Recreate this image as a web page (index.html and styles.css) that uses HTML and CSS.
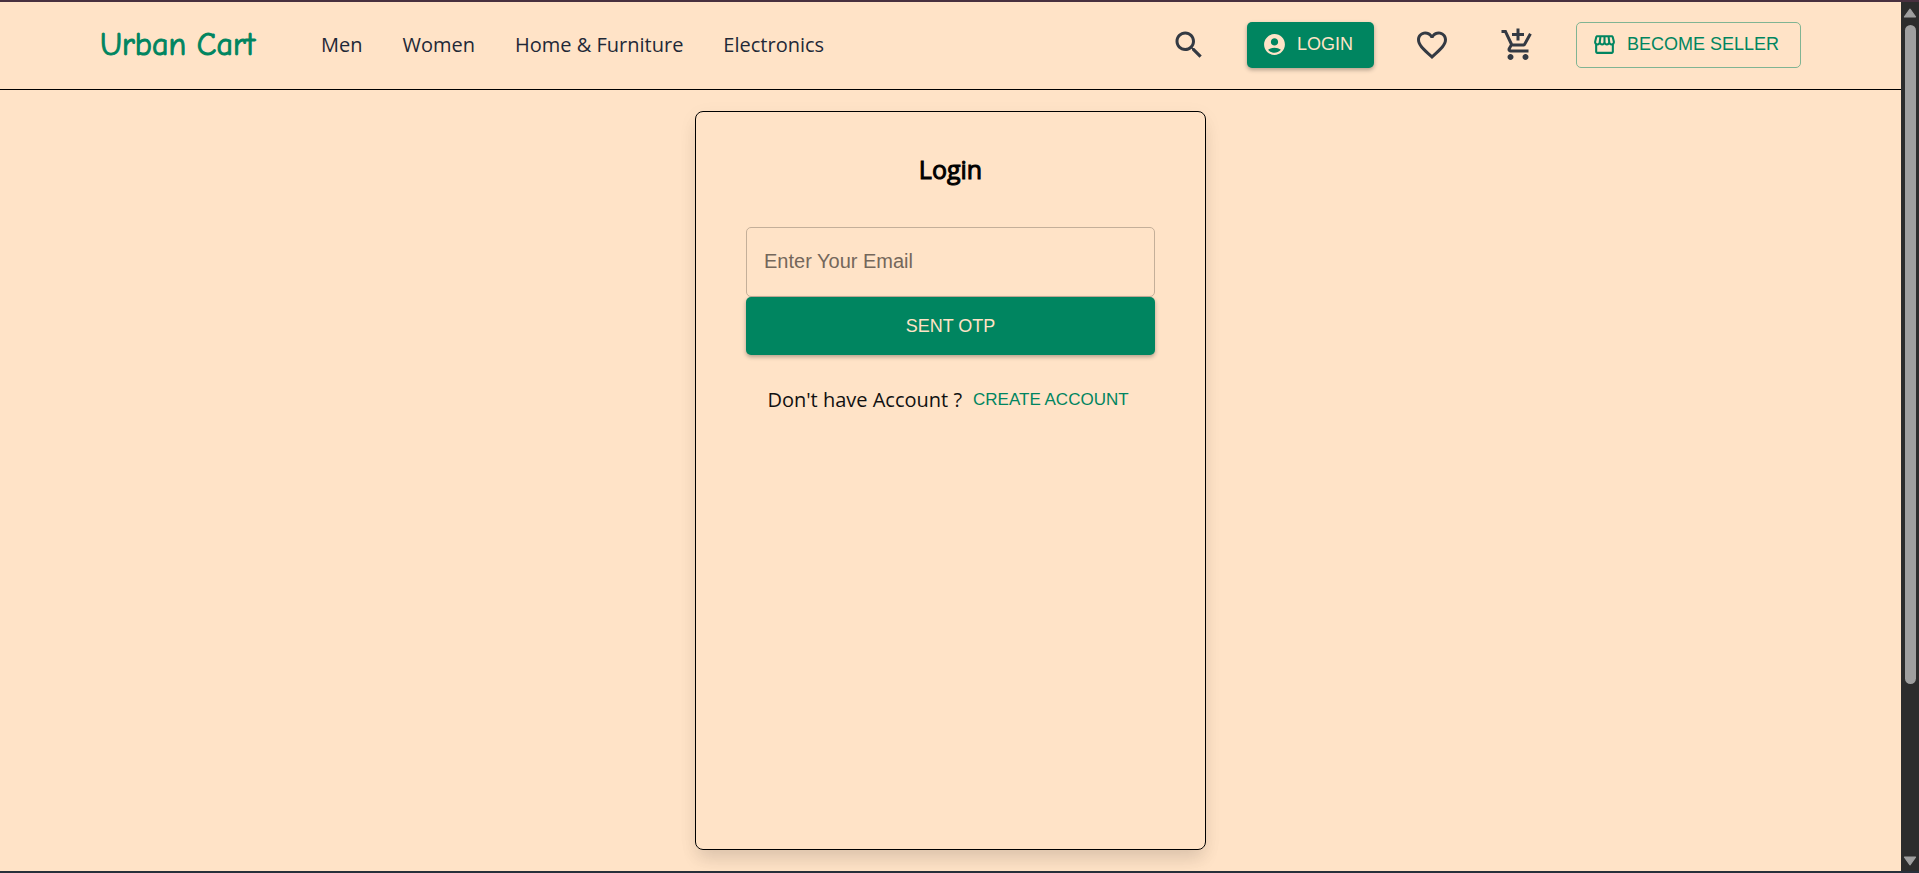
FILE: index.html
```html
<!DOCTYPE html>
<html lang="en">
<head>
<meta charset="utf-8">
<meta name="viewport" content="width=device-width, initial-scale=1">
<title>Urban Cart</title>
<link rel="stylesheet" href="styles.css">
</head>
<body>
<div class="window">
  <div class="view">
    <header class="topbar">
      <a class="logo" href="#">Urban Cart</a>
      <nav class="nav">
        <a href="#">Men</a>
        <a href="#">Women</a>
        <a href="#">Home &amp; Furniture</a>
        <a href="#">Electronics</a>
      </nav>
      <div class="actions">
        <button class="icon-button" type="button" aria-label="Search">
          <svg viewBox="0 0 24 24"><path d="M15.5 14h-.79l-.28-.27C15.41 12.59 16 11.11 16 9.5 16 5.91 13.09 3 9.5 3S3 5.91 3 9.5 5.91 16 9.5 16c1.61 0 3.09-.59 4.23-1.57l.27.28v.79l5 4.99L20.49 19l-4.99-5zm-6 0C7.01 14 5 11.99 5 9.5S7.01 5 9.5 5 14 7.01 14 9.5 11.99 14 9.5 14z"/></svg>
        </button>
        <button class="button button-solid" type="button">
          <svg viewBox="0 0 24 24"><path d="M12 2C6.48 2 2 6.48 2 12s4.48 10 10 10 10-4.48 10-10S17.52 2 12 2zm0 4c1.93 0 3.5 1.57 3.5 3.5S13.93 13 12 13s-3.5-1.57-3.5-3.5S10.07 6 12 6zm0 14c-2.03 0-4.43-.82-6.14-2.88C7.55 15.8 9.68 15 12 15s4.45.8 6.14 2.12C16.43 19.18 14.03 20 12 20z"/></svg>
          LOGIN
        </button>
        <button class="icon-button" type="button" aria-label="Wishlist">
          <svg viewBox="0 0 24 24"><path d="M16.5 3c-1.74 0-3.41.81-4.5 2.09C10.91 3.81 9.24 3 7.5 3 4.42 3 2 5.42 2 8.5c0 3.78 3.4 6.86 8.55 11.54L12 21.35l1.45-1.32C18.6 15.36 22 12.28 22 8.5 22 5.42 19.58 3 16.5 3zm-4.4 15.55l-.1.1-.1-.1C7.14 14.24 4 11.39 4 8.5 4 6.5 5.5 5 7.5 5c1.54 0 3.04.99 3.57 2.36h1.87C13.46 5.99 14.96 5 16.5 5c2 0 3.5 1.5 3.5 3.5 0 2.89-3.14 5.74-7.9 10.05z"/></svg>
        </button>
        <button class="icon-button" type="button" aria-label="Cart">
          <svg viewBox="0 0 24 24"><path d="M11 9h2V6h3V4h-3V1h-2v3H8v2h3v3zm-4 9c-1.1 0-1.99.9-1.99 2S5.9 22 7 22s2-.9 2-2-.9-2-2-2zm10 0c-1.1 0-1.99.9-1.99 2s.89 2 1.99 2 2-.9 2-2-.9-2-2-2zm-9.83-3.25l.03-.12.9-1.63h7.45c.75 0 1.41-.41 1.75-1.03l3.86-7.01L19.42 4h-.01l-1.1 2-2.76 5H8.53l-.13-.27L6.16 6l-.95-2-.94-2H1v2h2l3.6 7.59-1.35 2.45c-.16.28-.25.61-.25.96 0 1.1.9 2 2 2h12v-2H7.42c-.13 0-.25-.11-.25-.25z"/></svg>
        </button>
        <button class="button button-outline" type="button">
          <svg viewBox="0 0 24 24"><path d="M21.9 8.89l-1.05-4.37c-.22-.9-1-1.52-1.91-1.52H5.05c-.9 0-1.69.63-1.9 1.52L2.1 8.89c-.24 1.02-.02 2.06.62 2.88.08.11.19.19.28.29V19c0 1.1.9 2 2 2h14c1.1 0 2-.9 2-2v-6.94c.09-.09.2-.18.28-.28.64-.82.87-1.87.62-2.89zm-2.99-3.9l1.05 4.37c.1.42.01.84-.25 1.17-.14.18-.44.47-.94.47-.61 0-1.14-.49-1.21-1.14L16.98 5l1.93-.01zM13 5h1.96l.54 4.52c.05.39-.07.78-.33 1.07-.22.26-.54.41-.95.41-.67 0-1.22-.59-1.22-1.31V5zM8.49 9.52L9.04 5H11v4.69c0 .72-.55 1.31-1.29 1.31-.34 0-.65-.15-.89-.41-.25-.29-.37-.68-.33-1.07zm-4.45-.16L5.05 5h1.97l-.58 4.86c-.08.65-.6 1.14-1.21 1.14-.49 0-.8-.29-.93-.47-.27-.32-.36-.75-.26-1.17zM5 19v-6.03c.08.01.15.03.23.03.87 0 1.66-.36 2.24-.95.6.6 1.4.95 2.31.95.87 0 1.65-.36 2.23-.93.59.57 1.39.93 2.29.93.84 0 1.64-.35 2.24-.95.58.59 1.37.95 2.24.95.08 0 .15-.02.23-.03V19H5z"/></svg>
          BECOME SELLER
        </button>
      </div>
    </header>
    <main class="page">
      <form class="card">
        <h1>Login</h1>
        <input class="field" type="email" placeholder="Enter Your Email" aria-label="Enter Your Email">
        <button class="submit" type="button">SENT OTP</button>
        <p class="signup">Don't have Account ? <button class="text-button" type="button">CREATE ACCOUNT</button></p>
      </form>
    </main>
  </div>
  <div class="scrollbar" aria-hidden="true">
    <svg viewBox="0 0 12 9"><path d="M6 1 11 8H1z"/></svg>
    <div class="track"><div class="thumb"></div></div>
    <svg viewBox="0 0 12 9"><path d="M6 8 1 1h10z"/></svg>
  </div>
</div>
</body>
</html>
```
FILE: styles.css
```css
:root {
  --green: #008560;
  --cream: #ffe3c7;
  --sans: "Liberation Sans", Arial, sans-serif;
}

* { box-sizing: border-box; }

body {
  margin: 0;
  background: var(--cream);
  color: #111;
  font: 20px/30px "Open Sans", sans-serif;
}

button, input { font-family: var(--sans); }
button { cursor: pointer; }
svg { display: block; fill: currentColor; }

.window {
  display: flex;
  min-height: 100vh;
  border-top: 2px solid #48303f;
  border-bottom: 2px solid #27303b;
}

.view {
  flex: 1;
  display: flex;
  flex-direction: column;
}

.topbar {
  display: flex;
  align-items: center;
  height: 88px;
  padding: 0 100px 2px;
  border-bottom: 1px solid #000;
}

.logo {
  width: 221px;
  color: var(--green);
  font: 32px/40px "Comic Sans MS", "Comic Neue", cursive;
  -webkit-text-stroke: 1px var(--green);
  text-decoration: none;
}

.nav { display: flex; gap: 40px; }
.nav a { color: #1f2937; text-decoration: none; }

.actions {
  display: flex;
  align-items: center;
  gap: 30px;
  margin-left: auto;
}

.icon-button {
  padding: 10px;
  border: 0;
  background: none;
  color: #343a43;
}
.icon-button svg { width: 36px; height: 36px; }

.button {
  display: flex;
  align-items: center;
  gap: 10px;
  height: 46px;
  padding: 0 21px 0 15px;
  border: 0;
  border-radius: 5px;
  font-size: 18px;
}
.button svg { width: 25px; height: 25px; }

.button-solid, .submit {
  background: var(--green);
  color: var(--cream);
  box-shadow: 0 2px 4px rgba(0, 0, 0, .3);
}

.button-outline {
  border: 1px solid #80b493;
  background: none;
  color: var(--green);
}

.page {
  flex: 1;
  display: flex;
  justify-content: center;
  padding: 21px 20px;
}

.card {
  display: flex;
  flex-direction: column;
  width: 100%;
  max-width: 511px;
  padding: 40px 50px;
  border: 1px solid #000;
  border-radius: 8px;
  box-shadow: 0 12px 18px -3px rgba(0, 0, 0, .1), 0 5px 20px rgba(0, 0, 0, .05);
}

h1 {
  margin: 0 0 40px;
  color: #000;
  font-size: 25px;
  font-weight: 400;
  line-height: 35px;
  text-align: center;
  -webkit-text-stroke: 1px #000;
}

.field {
  width: 100%;
  height: 70px;
  padding: 0 17px 2px;
  border: 1px solid #c4af99;
  border-radius: 5px;
  background: none;
  font-size: 20px;
}
.field::placeholder { color: #74675b; opacity: 1; }

.submit {
  height: 58px;
  border: 0;
  border-radius: 5px;
  font-size: 18px;
}

.signup {
  display: flex;
  justify-content: center;
  align-items: center;
  gap: 6px;
  margin: 30px 0 0;
}

.text-button {
  padding: 5px;
  border: 0;
  background: none;
  color: var(--green);
  font-size: 17px;
}

.scrollbar {
  display: flex;
  flex-direction: column;
  align-items: center;
  gap: 7px;
  width: 18px;
  padding: 6px 0 5px;
  background: #2c2c2c;
  color: #9f9f9f;
}
.scrollbar svg {
  width: 14px;
  height: 10px;
  stroke: currentColor;
  stroke-linejoin: round;
}

.track { flex: 1; width: 11px; }
.thumb {
  height: 80%;
  border-radius: 6px;
  background: #9f9f9f;
}
```
